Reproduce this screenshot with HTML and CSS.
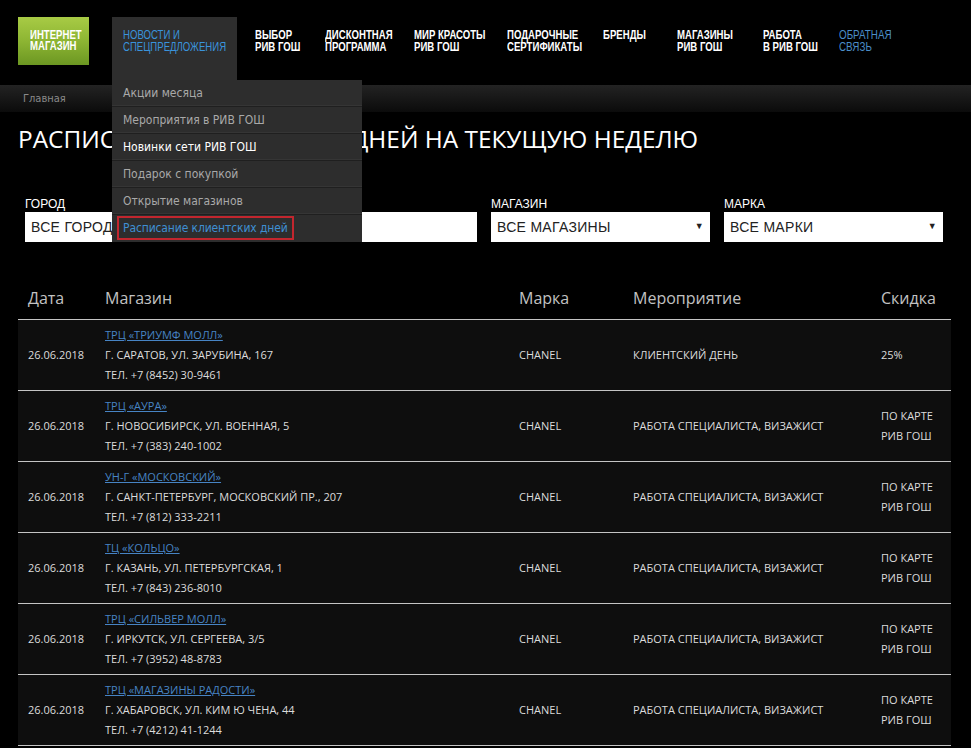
FILE: index.html
```html
<!DOCTYPE html>
<html lang="ru">
<head>
<meta charset="utf-8">
<title>Расписание клиентских дней</title>
<link rel="stylesheet" href="styles.css">
</head>
<body>
<header class="top">
  <a class="logo" href="#"><span class="narrow">ИНТЕРНЕТ<br>МАГАЗИН</span></a>
  <nav class="menu">
    <div class="menu-item active">
      <a class="menu-link" href="#">НОВОСТИ И<br>СПЕЦПРЕДЛОЖЕНИЯ</a>
      <ul class="dropdown">
        <li><a href="#">Акции месяца</a></li>
        <li><a href="#">Мероприятия в РИВ ГОШ</a></li>
        <li class="hover"><a href="#">Новинки сети РИВ ГОШ</a></li>
        <li><a href="#">Подарок с покупкой</a></li>
        <li><a href="#">Открытие магазинов</a></li>
        <li class="current"><a href="#">Расписание клиентских дней</a></li>
      </ul>
    </div>
    <div class="menu-item"><a class="menu-link" href="#">ВЫБОР<br>РИВ ГОШ</a></div>
    <div class="menu-item"><a class="menu-link" href="#">ДИСКОНТНАЯ<br>ПРОГРАММА</a></div>
    <div class="menu-item"><a class="menu-link" href="#">МИР КРАСОТЫ<br>РИВ ГОШ</a></div>
    <div class="menu-item"><a class="menu-link" href="#">ПОДАРОЧНЫЕ<br>СЕРТИФИКАТЫ</a></div>
    <div class="menu-item"><a class="menu-link" href="#">БРЕНДЫ</a></div>
    <div class="menu-item"><a class="menu-link" href="#">МАГАЗИНЫ<br>РИВ ГОШ</a></div>
    <div class="menu-item"><a class="menu-link" href="#">РАБОТА<br>В РИВ ГОШ</a></div>
    <div class="menu-item feedback"><a class="menu-link" href="#">ОБРАТНАЯ<br>СВЯЗЬ</a></div>
  </nav>
</header>

<div class="crumbs"><a href="#">Главная</a></div>

<main class="content">
  <h1 class="title">РАСПИСАНИЕ КЛИЕНТСКИХ ДНЕЙ НА ТЕКУЩУЮ НЕДЕЛЮ</h1>

  <form class="filters">
    <label class="field">
      <span class="field-label">ГОРОД</span>
      <span class="select">ВСЕ ГОРОДА<span class="arrow">▼</span></span>
    </label>
    <label class="field">
      <span class="field-label">ДАТА</span>
      <span class="select"></span>
    </label>
    <label class="field">
      <span class="field-label">МАГАЗИН</span>
      <span class="select">ВСЕ МАГАЗИНЫ<span class="arrow">▼</span></span>
    </label>
    <label class="field">
      <span class="field-label">МАРКА</span>
      <span class="select">ВСЕ МАРКИ<span class="arrow">▼</span></span>
    </label>
  </form>

  <table class="schedule">
    <thead>
      <tr>
        <th class="c-date">Дата</th>
        <th class="c-store">Магазин</th>
        <th class="c-brand">Марка</th>
        <th class="c-event">Мероприятие</th>
        <th class="c-disc">Скидка</th>
      </tr>
    </thead>
    <tbody>
      <tr>
        <td>26.06.2018</td>
        <td><a href="#">ТРЦ «ТРИУМФ МОЛЛ»</a><br>Г. САРАТОВ, УЛ. ЗАРУБИНА, 167<br>ТЕЛ. +7 (8452) 30-9461</td>
        <td>CHANEL</td>
        <td>КЛИЕНТСКИЙ ДЕНЬ</td>
        <td>25%</td>
      </tr>
      <tr>
        <td>26.06.2018</td>
        <td><a href="#">ТРЦ «АУРА»</a><br>Г. НОВОСИБИРСК, УЛ. ВОЕННАЯ, 5<br>ТЕЛ. +7 (383) 240-1002</td>
        <td>CHANEL</td>
        <td>РАБОТА СПЕЦИАЛИСТА, ВИЗАЖИСТ</td>
        <td>ПО КАРТЕ<br>РИВ ГОШ</td>
      </tr>
      <tr>
        <td>26.06.2018</td>
        <td><a href="#">УН-Г «МОСКОВСКИЙ»</a><br>Г. САНКТ-ПЕТЕРБУРГ, МОСКОВСКИЙ ПР., 207<br>ТЕЛ. +7 (812) 333-2211</td>
        <td>CHANEL</td>
        <td>РАБОТА СПЕЦИАЛИСТА, ВИЗАЖИСТ</td>
        <td>ПО КАРТЕ<br>РИВ ГОШ</td>
      </tr>
      <tr>
        <td>26.06.2018</td>
        <td><a href="#">ТЦ «КОЛЬЦО»</a><br>Г. КАЗАНЬ, УЛ. ПЕТЕРБУРГСКАЯ, 1<br>ТЕЛ. +7 (843) 236-8010</td>
        <td>CHANEL</td>
        <td>РАБОТА СПЕЦИАЛИСТА, ВИЗАЖИСТ</td>
        <td>ПО КАРТЕ<br>РИВ ГОШ</td>
      </tr>
      <tr>
        <td>26.06.2018</td>
        <td><a href="#">ТРЦ «СИЛЬВЕР МОЛЛ»</a><br>Г. ИРКУТСК, УЛ. СЕРГЕЕВА, 3/5<br>ТЕЛ. +7 (3952) 48-8783</td>
        <td>CHANEL</td>
        <td>РАБОТА СПЕЦИАЛИСТА, ВИЗАЖИСТ</td>
        <td>ПО КАРТЕ<br>РИВ ГОШ</td>
      </tr>
      <tr>
        <td>26.06.2018</td>
        <td><a href="#">ТРЦ «МАГАЗИНЫ РАДОСТИ»</a><br>Г. ХАБАРОВСК, УЛ. КИМ Ю ЧЕНА, 44<br>ТЕЛ. +7 (4212) 41-1244</td>
        <td>CHANEL</td>
        <td>РАБОТА СПЕЦИАЛИСТА, ВИЗАЖИСТ</td>
        <td>ПО КАРТЕ<br>РИВ ГОШ</td>
      </tr>
    </tbody>
  </table>
</main>
</body>
</html>
```

FILE: styles.css
```css
* { box-sizing: border-box; }

html, body {
  margin: 0;
  padding: 0;
  background: #000;
  color: #fff;
  font-family: "Open Sans", "Liberation Sans", sans-serif;
}

a { text-decoration: none; color: inherit; }

/* ---------- header ---------- */
.top {
  display: flex;
  align-items: flex-start;
  height: 85px;
  padding: 17px 0 0 18px;
  background: #000;
}

.logo {
  flex: 0 0 71px;
  width: 71px;
  min-width: 0;
  height: 48px;
  margin-right: 23px;
  padding: 13px 0 0 12px;
  overflow: hidden;
  background: linear-gradient(to bottom, #a8cb45 0%, #8db533 50%, #6c9722 100%);
  color: #fff;
  font-family: "Liberation Sans", sans-serif;
  font-weight: bold;
  font-size: 12px;
  line-height: 11px;
}

.narrow,
.menu-link {
  display: inline-block;
  white-space: nowrap;
  transform: scaleX(0.8);
  transform-origin: left top;
}

.menu {
  display: grid;
  grid-template-columns: 132px 70px 89px 93px 96px 74px 86px 76px auto;
  font-family: "Liberation Sans", sans-serif;
  font-weight: bold;
  font-size: 12px;
  line-height: 11.5px;
}

.menu-item {
  position: relative;
  height: 63px;
  padding: 13px 0 0 11px;
}

.menu-link { color: #fff; }

.menu-item.active {
  width: 125px;
  background: #2e2e2e;
}
.menu-item.active .menu-link { color: #3a93dc; font-weight: normal; transform: scaleX(0.8); }
.menu-item.feedback .menu-link { color: #4b8ec8; font-weight: normal; transform: scaleX(0.82); }

.dropdown {
  position: absolute;
  top: 63px;
  left: 0;
  z-index: 10;
  width: 250px;
  margin: 0;
  padding: 0;
  list-style: none;
  background: #2d2d2d;
  font-family: "DejaVu Sans", "Liberation Sans", sans-serif;
  font-stretch: condensed;
  font-weight: normal;
  font-size: 12px;
  line-height: 16px;
}

.dropdown li {
  height: 27px;
  padding: 5px 0 0 11px;
  border-bottom: 1px solid #1f1f1f;
  box-shadow: inset 0 -1px 0 #353535;
}
.dropdown li:last-child { border-bottom: 0; box-shadow: none; padding-top: 1px; }
.dropdown a { color: #a9a9a9; }
.dropdown li.hover a { color: #fff; }
.dropdown li.current a {
  display: inline-block;
  margin-left: -6px;
  padding: 2px 4px;
  border: 2px solid #c2262e;
  color: #3f8fd2;
  letter-spacing: -0.12px;
}

/* ---------- breadcrumbs ---------- */
.crumbs {
  height: 27px;
  padding: 7px 0 0 23px;
  background: linear-gradient(to bottom, #232323, #0b0b0b);
  font-family: "DejaVu Sans", "Liberation Sans", sans-serif;
  font-stretch: condensed;
  font-size: 11px;
  line-height: 14px;
}
.crumbs a { color: #8a8a8a; }

/* ---------- content ---------- */
.content {
  padding: 0 20px 0 18px;
}

.title {
  margin: 12px 0 0;
  font-family: "Open Sans", "Liberation Sans", sans-serif;
  font-weight: normal;
  font-size: 24.4px;
  line-height: 30px;
  color: #fff;
  white-space: nowrap;
}

.filters {
  display: grid;
  grid-template-columns: repeat(4, 219px);
  column-gap: 14px;
  margin: 43px 0 0 7px;
}

.field { display: flex; flex-direction: column; }

.field-label {
  font-family: "Liberation Sans", sans-serif;
  font-size: 12px;
  line-height: 14px;
  margin-bottom: 1px;
  color: #fff;
}

.select {
  position: relative;
  height: 30px;
  padding: 6px 0 0 6px;
  background: #fff;
  color: #222;
  font-family: "Liberation Sans", sans-serif;
  font-size: 14px;
  line-height: 18px;
  letter-spacing: 0.3px;
}

.arrow {
  position: absolute;
  right: 6px;
  top: 9px;
  font-size: 9px;
  line-height: 10px;
  color: #222;
}

/* ---------- table ---------- */
.schedule {
  width: 933px;
  margin-top: 38px;
  border-collapse: separate;
  border-spacing: 0;
  table-layout: fixed;
}

.c-date { width: 77px; }
.c-store { width: 414px; }
.c-brand { width: 114px; }
.c-event { width: 248px; }
.c-disc { width: 80px; }

.schedule th {
  padding: 7px 0 10px 10px;
  border-bottom: 1px solid #c4c4c4;
  text-align: left;
  font-weight: normal;
  font-size: 16px;
  line-height: 22px;
  color: #c2c2c2;
}

.schedule td {
  padding: 5px 0 5px 10px;
  border-bottom: 1px solid #c4c4c4;
  background: #0e0e0e;
  vertical-align: middle;
  font-size: 11px;
  line-height: 20px;
  color: #dcdcdc;
  white-space: nowrap;
}

.schedule td a {
  color: #4784c4;
  text-decoration: underline;
}
```
